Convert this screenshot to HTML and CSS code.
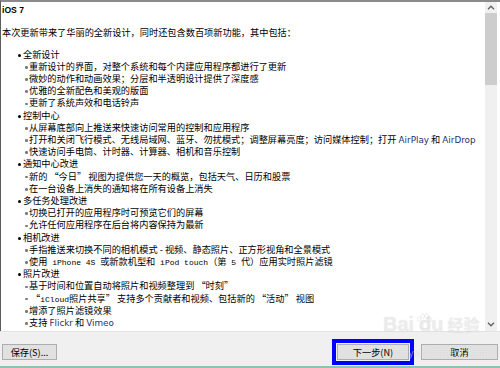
FILE: index.html
```html
<!DOCTYPE html>
<html lang="zh-CN">
<head>
    <meta charset="UTF-8">
    <meta name="viewport" content="width=device-width, initial-scale=1.0">
    <title>iOS 7 更新说明</title>
    <link rel="stylesheet" href="styles.css">
</head>
<body>
    <div class="dialog">
        <div class="pane">
            <div class="doc">
                <p class="title">iOS 7</p>
                <p class="intro">本次更新带来了华丽的全新设计，同时还包含数百项新功能，其中包括：</p>
                <ul class="topics">
                    <li>全新设计
                        <ul>
                            <li>重新设计的界面，对整个系统和每个内建应用程序都进行了更新</li>
                            <li>微妙的动作和动画效果；分层和半透明设计提供了深度感</li>
                            <li>优雅的全新配色和美观的版面</li>
                            <li>更新了系统声效和电话铃声</li>
                        </ul>
                    </li>
                    <li>控制中心
                        <ul>
                            <li>从屏幕底部向上推送来快速访问常用的控制和应用程序</li>
                            <li>打开和关闭飞行模式、无线局域网、蓝牙、勿扰模式；调整屏幕亮度；访问媒体控制；打开 <span class="en">AirPlay</span> 和 <span class="en">AirDrop</span></li>
                            <li>快速访问手电筒、计时器、计算器、相机和音乐控制</li>
                        </ul>
                    </li>
                    <li>通知中心改进
                        <ul>
                            <li>新的 “今日” 视图为提供您一天的概览，包括天气、日历和股票</li>
                            <li>在一台设备上消失的通知将在所有设备上消失</li>
                        </ul>
                    </li>
                    <li>多任务处理改进
                        <ul>
                            <li>切换已打开的应用程序时可预览它们的屏幕</li>
                            <li>允许任何应用程序在后台将内容保持为最新</li>
                        </ul>
                    </li>
                    <li>相机改进
                        <ul>
                            <li>手指推送来切换不同的相机模式 - 视频、静态照片、正方形视角和全景模式</li>
                            <li>使用<span class="mono"> iPhone 4S </span>或新款机型和<span class="mono"> iPod touch</span>（第<span class="mono"> 5 </span>代）应用实时照片滤镜</li>
                        </ul>
                    </li>
                    <li>照片改进
                        <ul>
                            <li>基于时间和位置自动将照片和视频整理到 “时刻”</li>
                            <li> “<span class="mono">iCloud</span>照片共享” 支持多个贡献者和视频、包括新的 “活动” 视图</li>
                            <li>增添了照片滤镜效果</li>
                            <li>支持 <span class="en">Flickr</span> 和 <span class="en">Vimeo</span></li>
                        </ul>
                    </li>
                </ul>
            </div>
            <div class="scrollbar">
                <span class="arrow">
                    <svg width="8" height="5" viewBox="0 0 8 5"><path d="M1 4.2 L4 1.2 L7 4.2" fill="none" stroke="#606060" stroke-width="1.3"/></svg>
                </span>
                <span class="thumb"></span>
                <span class="track"></span>
                <span class="arrow">
                    <svg width="8" height="5" viewBox="0 0 8 5"><path d="M1 0.8 L4 3.8 L7 0.8" fill="none" stroke="#606060" stroke-width="1.3"/></svg>
                </span>
            </div>
        </div>
        <div class="actions">
            <button class="btn btn-save">保存(S)...</button>
            <div class="nav">
                <button class="btn btn-next">下一步(N)</button>
                <button class="btn btn-cancel">取消</button>
            </div>
        </div>

        <div class="watermark">
            <div class="wm-logo">
                <span>Bai</span>
                <svg class="paw" width="18" height="18" viewBox="0 0 18 18">
                    <ellipse cx="4" cy="6" rx="1.8" ry="2.4"/>
                    <ellipse cx="7.5" cy="3" rx="1.8" ry="2.4"/>
                    <ellipse cx="11.5" cy="3" rx="1.8" ry="2.4"/>
                    <ellipse cx="14.5" cy="6.5" rx="1.8" ry="2.4"/>
                    <path d="M9.5 8 C6 8 4.5 12 5 14 C5.5 16 8 15.5 9.5 15.5 C11 15.5 13.5 16 14 14 C14.5 12 13 8 9.5 8 Z"/>
                </svg>
                <span>du</span>
                <span class="wm-cn">经验</span>
            </div>
            <div class="wm-url">jingyan.baidu.com</div>
        </div>
    </div>
</body>
</html>
```

FILE: styles.css
```css
body {
    margin: 0;
    width: 500px;
    height: 368px;
    overflow: hidden;
    background: white;
    font-family: "Noto Sans CJK SC", sans-serif;
    font-size: 9.2px;
    color: #000;
}
.dialog {
    position: relative;
    height: 366px;
    display: flex;
    flex-direction: column;
    border-bottom: 2px solid #8fc2af;
}
.pane {
    height: 329px;
    display: flex;
    border-top: 2px solid #8a8a8a;
    border-left: 1px solid #5c5c5c;
    background: white;
}
.doc {
    flex: 1;
    overflow: hidden;
    padding-left: 1px;
    line-height: 12.2px;
}
.title {
    margin: 2px 0 0;
    font-family: "Liberation Sans", sans-serif;
    font-weight: bold;
    font-size: 8.6px;
}
.intro {
    margin: 9.6px 0 0;
}
.topics {
    margin: 9.6px 0 0;
    padding: 0;
    list-style: none;
}
.topics > li {
    padding-left: 21px;
}
.topics > li::before {
    content: "";
    display: inline-block;
    width: 3px;
    height: 3px;
    margin-left: -5px;
    margin-right: 2px;
    border-radius: 50%;
    background: #000;
    vertical-align: middle;
}
.topics ul {
    margin: 0;
    padding: 0;
    list-style: none;
}
.topics ul li {
    padding-left: 6px;
    white-space: nowrap;
}
.topics ul li::before {
    content: "";
    display: inline-block;
    width: 2.5px;
    height: 2.5px;
    margin-left: -4px;
    margin-right: 1.5px;
    border-radius: 50%;
    background: #7a7a7a;
    vertical-align: middle;
}
.en {
    font-family: "DejaVu Sans", sans-serif;
    font-size: 8.8px;
    line-height: 1;
    color: #1d3270;
}
.mono {
    font-family: "Liberation Mono", monospace;
    font-size: 8px;
    line-height: 1;
    white-space: pre;
}
.scrollbar {
    width: 12px;
    margin-right: 3px;
    display: flex;
    flex-direction: column;
    background: #f0f0f0;
}
.arrow {
    height: 11px;
    display: flex;
    align-items: center;
    justify-content: center;
}
.arrow:last-child {
    height: 13px;
}
.thumb {
    height: 72px;
    background: #cdcdcd;
}
.track {
    flex: 1;
}
.actions {
    flex: 1;
    display: flex;
    align-items: flex-start;
    padding: 12px 2px 0 2px;
    background: #f0f0f0;
    border-top: 1px solid #e3e3e3;
}
.nav {
    margin-left: auto;
    display: flex;
    gap: 12px;
}
.btn {
    height: 16px;
    padding: 0;
    background: #e1e1e1;
    border: 1px solid #adadad;
    border-radius: 0;
    font-family: "Noto Sans CJK SC", sans-serif;
    font-size: 9.2px;
    line-height: 14px;
    color: #000;
}
.btn-save {
    width: 55px;
}
.btn-next {
    width: 72px;
    outline: 4px solid #0000ff;
    outline-offset: 1px;
}
.btn-cancel {
    width: 77px;
}
.watermark {
    position: absolute;
    left: 383px;
    top: 314px;
    color: rgba(255, 255, 255, 0.5);
    pointer-events: none;
}
.wm-logo {
    display: flex;
    align-items: flex-end;
    font-family: "Liberation Sans", sans-serif;
    font-weight: bold;
    font-size: 20px;
    line-height: 20px;
    text-shadow: 0 0 1px rgba(0, 0, 0, 0.16);
}
.paw {
    align-self: flex-start;
    margin: -1px -14px 0 1px;
    fill: rgba(255, 255, 255, 0.5);
    stroke: rgba(0, 0, 0, 0.1);
    stroke-width: 0.7;
}
.wm-cn {
    margin-left: 4px;
    font-family: "Noto Sans CJK SC", sans-serif;
    font-size: 16px;
}
.wm-url {
    margin: 14px 0 0 6px;
    font-family: "Liberation Sans", sans-serif;
    font-size: 10px;
    letter-spacing: 1px;
    text-shadow: 0 0 1px rgba(0, 0, 0, 0.1);
}
```
